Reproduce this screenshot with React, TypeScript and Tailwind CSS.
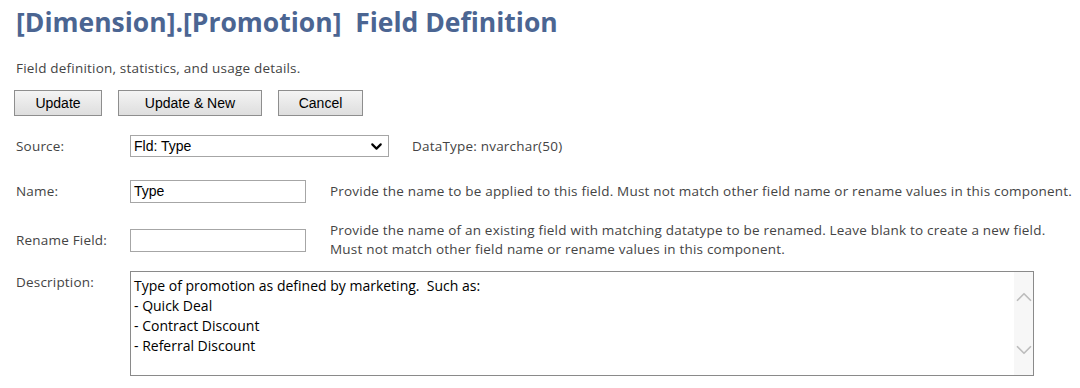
import { ChevronDown, ChevronUp } from "lucide-react";

const grayText = "text-[13.5px] tracking-[0.2px] text-[#444]";
const labelCls = `w-[114px] shrink-0 ${grayText}`;
const inputCls =
    "h-[23px] w-[176px] border border-[#a6a6a6] bg-white px-[3px] text-[14px] leading-[21px] text-black font-['Liberation_Sans',Arial,sans-serif]";

function Btn({ label, width }: { label: string; width: string }) {
    return (
        <button
            className={`${width} h-[26px] border border-[#8e8e8e] bg-gradient-to-b from-[#f4f4f4] to-[#dedede] text-[14px] text-black font-['Liberation_Sans',Arial,sans-serif]`}
        >
            {label}
        </button>
    );
}

export default function App() {
    return (
        <div className="min-h-screen bg-white pl-4 font-['Open_Sans',sans-serif]">
            <h1 className="h-[58px] pt-[5px] text-[26.5px] font-bold leading-[34px] text-[#4b6592] whitespace-pre">
                {"[Dimension].[Promotion]  Field Definition"}
            </h1>

            <p className={`h-[20px] leading-[20px] ${grayText}`}>
                Field definition, statistics, and usage details.
            </p>

            {/* Actions */}
            <div className="-ml-[2px] mt-[12px] flex gap-[16px]">
                <Btn label="Update" width="w-[88px]" />
                <Btn label="Update & New" width="w-[144px]" />
                <Btn label="Cancel" width="w-[85px]" />
            </div>

            {/* Source */}
            <div className="mt-[19px] flex items-center">
                <div className={labelCls}>Source:</div>
                <div className="flex h-[22px] w-[259px] items-center justify-between border border-[#a6a6a6] bg-white pl-[3px] pr-[3px]">
                    <span className="text-[14px] text-black font-['Liberation_Sans',Arial,sans-serif]">Fld: Type</span>
                    <ChevronDown size={17} strokeWidth={3} className="text-black" />
                </div>
                <div className={`ml-[23px] ${grayText}`}>DataType: nvarchar(50)</div>
            </div>

            {/* Name */}
            <div className="mt-[23px] flex items-center">
                <div className={labelCls}>Name:</div>
                <div className={inputCls}>Type</div>
                <div className={`ml-[24px] ${grayText}`}>
                    Provide the name to be applied to this field. Must not match other field name or rename values in this component.
                </div>
            </div>

            {/* Rename */}
            <div className="mt-[18px] flex items-center">
                <div className={labelCls}>Rename Field:</div>
                <div className={inputCls}></div>
                <div className={`ml-[24px] leading-[19px] ${grayText}`}>
                    Provide the name of an existing field with matching datatype to be renamed. Leave blank to create a new field.
                    <br />
                    Must not match other field name or rename values in this component.
                </div>
            </div>

            {/* Description */}
            <div className="mt-[12px] flex items-start">
                <div className={`${labelCls} pt-[1px]`}>Description:</div>
                <div className="flex h-[105px] w-[904px] border border-[#8a8a8a] bg-white">
                    <div className="flex-1 px-[3px] pt-[4px] text-[14px] leading-[20px] text-black whitespace-pre">
                        {"Type of promotion as defined by marketing.  Such as:\n- Quick Deal\n- Contract Discount\n- Referral Discount"}
                    </div>
                    <div className="flex w-[19px] flex-col items-center justify-between overflow-hidden bg-[#f7f7f7] py-[12px]">
                        <ChevronUp size={26} strokeWidth={1.6} className="shrink-0 text-[#bdbdbd]" />
                        <ChevronDown size={26} strokeWidth={1.6} className="shrink-0 text-[#bdbdbd]" />
                    </div>
                </div>
            </div>
        </div>
    );
}
